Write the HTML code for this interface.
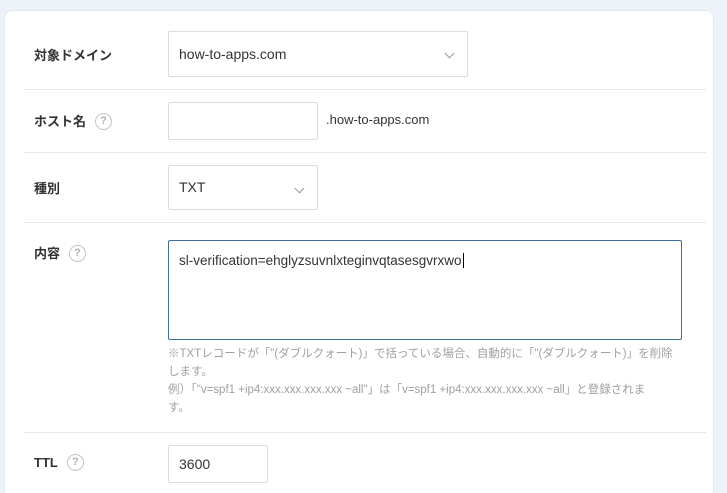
<!DOCTYPE html>
<html><head><meta charset="utf-8"><style>
html,body{margin:0;width:727px;height:493px;overflow:hidden}
body{background:#eef2f9;font-family:"Liberation Sans","Noto Sans CJK JP",sans-serif;position:relative}
.card{position:absolute;left:4px;top:10px;width:708px;height:500px;background:#fff;border:1px solid #e3e7ee;border-radius:8px}
.lbl{position:absolute;left:34px;font-size:13px;font-weight:bold;color:#333}
.q{display:inline-block;width:15px;height:15px;border:1.5px solid #c4c4c4;border-radius:50%;color:#b0b0b0;font-size:11px;text-align:center;line-height:15px;font-weight:bold;vertical-align:middle;margin-left:9px;margin-top:-2px}
.box{position:absolute;border:1px solid #dcdcdc;border-radius:2px;background:#fff;box-sizing:border-box;font-size:14px;color:#333;padding-left:10px}
.hr{position:absolute;left:24px;width:682px;height:1px;background:#e8e8e8}
.chev{position:absolute;width:6px;height:6px;border-right:1.5px solid #999;border-bottom:1.5px solid #999;transform:rotate(45deg)}
.help{position:absolute;left:168px;top:345px;font-size:11.5px;line-height:18px;color:#a0a0a0;letter-spacing:0;white-space:nowrap}
</style></head><body>
<div class="card"></div>
<div class="lbl" style="top:45px">対象ドメイン</div>
<div class="box" style="left:168px;top:31px;width:300px;height:46px;line-height:44px">how-to-apps.com</div>
<div class="chev" style="left:446px;top:50px"></div>
<div class="hr" style="top:89px"></div>
<div class="lbl" style="top:111px">ホスト名<span class="q">?</span></div>
<div class="box" style="left:168px;top:102px;width:150px;height:38px"></div>
<div style="position:absolute;left:326px;top:112px;font-size:13px;color:#333">.how-to-apps.com</div>
<div class="hr" style="top:152px"></div>
<div class="lbl" style="top:178px">種別</div>
<div class="box" style="left:168px;top:165px;width:150px;height:45px;line-height:43px">TXT</div>
<div class="chev" style="left:296px;top:185px"></div>
<div class="hr" style="top:222px"></div>
<div class="lbl" style="top:243px">内容<span class="q">?</span></div>
<div class="box" style="left:168px;top:240px;width:514px;height:100px;border-color:#3e6f98;padding-top:12px;font-size:13.5px">sl-verification=ehglyzsuvnlxteginvqtasesgvrxwo<span style="border-left:1px solid #000;margin-left:1px"></span></div>
<div class="help">※TXTレコードが「"(ダブルクォート)」で括っている場合、自動的に「"(ダブルクォート)」を削除<br>します。<br>例）「"v=spf1 +ip4:xxx.xxx.xxx.xxx ~all"」は「v=spf1 +ip4:xxx.xxx.xxx.xxx ~all」と登録されま<br>す。</div>
<div class="hr" style="top:432px"></div>
<div class="lbl" style="top:455px">TTL<span class="q">?</span></div>
<div class="box" style="left:168px;top:445px;width:100px;height:38px;line-height:36px">3600</div>
</body></html>
